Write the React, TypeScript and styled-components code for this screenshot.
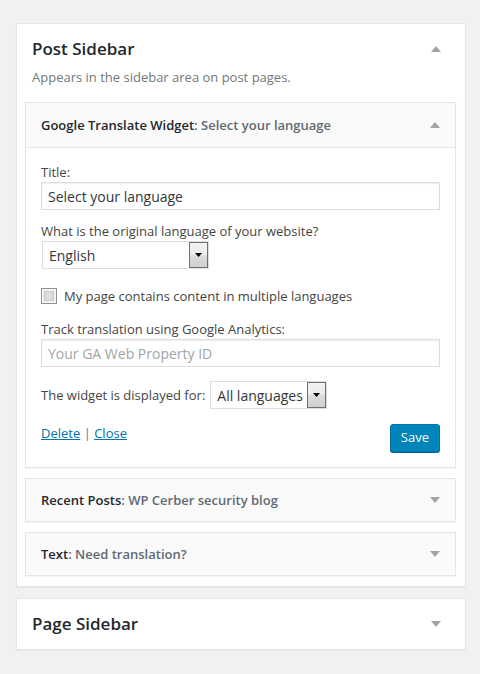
import React from 'react';
import styled, { createGlobalStyle } from 'styled-components';

const GlobalStyle = createGlobalStyle`
  body {
    margin: 0;
    background: #f1f1f1;
    font-family: "Open Sans", "Liberation Sans", sans-serif;
    color: #444;
  }
`;

const Page = styled.div`
  padding: 23px 14px 20px 16px;
  display: flex;
  flex-direction: column;
  gap: 11px;
`;

const SidebarBox = styled.div`
  background: #fff;
  border: 1px solid #e5e5e5;
  box-shadow: 0 1px 1px rgba(0, 0, 0, 0.04);
`;

const SidebarHead = styled.div<{ $closed?: boolean }>`
  display: flex;
  align-items: center;
  justify-content: space-between;
  padding: 15px 24px ${(p) => (p.$closed ? '15px' : '0')} 15px;
`;

const SidebarTitle = styled.h2`
  margin: 0;
  font-size: 17px;
  line-height: 20px;
  font-weight: 600;
  color: #23282d;
`;

const SidebarDesc = styled.p`
  margin: 9px 0 0 15px;
  font-size: 13px;
  line-height: 18px;
  color: #72777c;
`;

const WidgetList = styled.div`
  display: flex;
  flex-direction: column;
  gap: 10px;
  padding: 16px 9px 10px 8px;
`;

const Widget = styled.div`
  background: #fff;
  border: 1px solid #e5e5e5;
  box-shadow: 0 1px 1px rgba(0, 0, 0, 0.04);
`;

const WidgetHead = styled.div<{ $open?: boolean }>`
  display: flex;
  align-items: center;
  justify-content: space-between;
  height: ${(p) => (p.$open ? '44px' : '42px')};
  padding: 0 15px;
  background: #fafafa;
  border-bottom: ${(p) => (p.$open ? '1px solid #e5e5e5' : 'none')};
  font-size: 13px;
  font-weight: 600;
  color: #23282d;
`;

const InTitle = styled.span`
  color: #606a73;
`;

const WidgetBody = styled.div`
  padding: 15px 15px 15px;
  font-size: 13px;
  color: #444;
`;

const Field = styled.div`
  margin-bottom: 12px;
`;

const LastField = styled(Field)`
  margin-bottom: 14px;
`;

const Label = styled.label`
  display: block;
  line-height: 18px;
  margin-bottom: 1px;
`;

const TextInput = styled.div<{ $placeholder?: boolean }>`
  box-sizing: border-box;
  height: 28px;
  border: 1px solid #ddd;
  box-shadow: inset 0 1px 2px rgba(0, 0, 0, 0.07);
  padding: 0 6px;
  display: flex;
  align-items: center;
  font-size: 14px;
  color: ${(p) => (p.$placeholder ? '#a0a5aa' : '#32373c')};
`;

const Select = styled.div<{ $w: number }>`
  box-sizing: border-box;
  width: ${(p) => p.$w}px;
  height: 28px;
  border: 1px solid #ddd;
  display: flex;
  align-items: stretch;
  font-size: 14px;
  color: #32373c;
  background: #fff;
`;

const FirstSelect = styled(Select)`
  margin-left: 1px;
`;

const SelectText = styled.span`
  flex: 1;
  display: flex;
  align-items: center;
  padding-left: 6px;
`;

const SelectButton = styled.span`
  width: 17px;
  border: 1px solid #707070;
  background: linear-gradient(#f2f2f2 0%, #ebebeb 50%, #dddddd 51%, #cfcfcf 100%);
  display: flex;
  align-items: center;
  justify-content: center;
`;

const InlineRow = styled.div`
  display: flex;
  align-items: center;
  gap: 5px;
  margin-bottom: 15px;
`;

const CheckRow = styled.div`
  display: flex;
  align-items: center;
  gap: 7px;
  margin: 18px 0 15px;
`;

const CheckBox = styled.span`
  box-sizing: border-box;
  width: 16px;
  height: 16px;
  border: 1px solid #8f8f8f;
  background: #dcdcdc;
  box-shadow: inset 0 0 0 2px #f4f4f4, inset 0 0 0 3px #c8c8c8;
`;

const Actions = styled.div`
  display: flex;
  justify-content: space-between;
  align-items: flex-start;
`;

const Links = styled.div`
  color: #72777c;
  line-height: 18px;
`;

const Link = styled.a`
  color: #0073aa;
  text-decoration: underline;
`;

const SaveButton = styled.button`
  height: 28px;
  padding: 0 10px 2px;
  border-radius: 3px;
  border: 1px solid #0073aa;
  background: #0085ba;
  box-shadow: 0 1px 0 #006799;
  color: #fff;
  font-family: inherit;
  font-size: 13px;
`;

const Arrow: React.FC<{ up?: boolean }> = ({ up }) => (
  <svg width="10" height="6" viewBox="0 0 10 6">
    <polygon points={up ? '5,0 10,6 0,6' : '0,0 10,0 5,6'} fill="#a0a5aa" />
  </svg>
);

const Caret = () => (
  <svg width="7" height="4" viewBox="0 0 7 4">
    <polygon points="0,0 7,0 3.5,4" fill="#000" />
  </svg>
);

export default function App() {
  return (
    <>
      <GlobalStyle />
      <Page>
        <SidebarBox>
          <SidebarHead>
            <SidebarTitle>Post Sidebar</SidebarTitle>
            <Arrow up />
          </SidebarHead>
          <SidebarDesc>Appears in the sidebar area on post pages.</SidebarDesc>
          <WidgetList>
            <Widget>
              <WidgetHead $open>
                <span>
                  Google Translate Widget<InTitle>: Select your language</InTitle>
                </span>
                <Arrow up />
              </WidgetHead>
              <WidgetBody>
                <Field>
                  <Label>Title:</Label>
                  <TextInput>Select your language</TextInput>
                </Field>
                <Field>
                  <Label>What is the original language of your website?</Label>
                  <FirstSelect $w={167}>
                    <SelectText>English</SelectText>
                    <SelectButton>
                      <Caret />
                    </SelectButton>
                  </FirstSelect>
                </Field>
                <CheckRow>
                  <CheckBox />
                  <span>My page contains content in multiple languages</span>
                </CheckRow>
                <LastField>
                  <Label>Track translation using Google Analytics:</Label>
                  <TextInput $placeholder>Your GA Web Property ID</TextInput>
                </LastField>
                <InlineRow>
                  <span>The widget is displayed for:</span>
                  <Select $w={117}>
                    <SelectText>All languages</SelectText>
                    <SelectButton>
                      <Caret />
                    </SelectButton>
                  </Select>
                </InlineRow>
                <Actions>
                  <Links>
                    <Link>Delete</Link> | <Link>Close</Link>
                  </Links>
                  <SaveButton>Save</SaveButton>
                </Actions>
              </WidgetBody>
            </Widget>
            <Widget>
              <WidgetHead>
                <span>
                  Recent Posts<InTitle>: WP Cerber security blog</InTitle>
                </span>
                <Arrow />
              </WidgetHead>
            </Widget>
            <Widget>
              <WidgetHead>
                <span>
                  Text<InTitle>: Need translation?</InTitle>
                </span>
                <Arrow />
              </WidgetHead>
            </Widget>
          </WidgetList>
        </SidebarBox>
        <SidebarBox>
          <SidebarHead $closed>
            <SidebarTitle>Page Sidebar</SidebarTitle>
            <Arrow />
          </SidebarHead>
        </SidebarBox>
      </Page>
    </>
  );
}
